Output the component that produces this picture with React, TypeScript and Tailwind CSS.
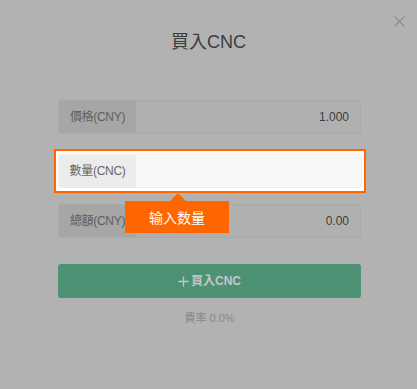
import React from 'react';

const font = { fontFamily: '"Liberation Sans", "Noto Sans CJK TC", sans-serif' };

const Row = ({
  label,
  value,
  highlight = false,
}: {
  label: string;
  value?: string;
  highlight?: boolean;
}) => (
  <div
    className={
      highlight
        ? 'flex h-[34px] rounded-[3px] border border-[#eeeeee] bg-[#f8f8f8] overflow-hidden'
        : 'flex h-[34px] rounded-[3px] border border-[#aaaaaa] bg-[#b0b0b0] overflow-hidden'
    }
  >
    <div
      className={
        highlight
          ? 'w-[77px] shrink-0 flex items-center justify-center bg-[#ececec] text-[12px] tracking-[-0.3px] text-[#666666]'
          : 'w-[77px] shrink-0 flex items-center justify-center bg-[#a6a6a6] text-[12px] tracking-[-0.3px] text-[#5e5e5e]'
      }
    >
      {label}
    </div>
    <div className="flex-1 flex items-center justify-end pr-[11px] text-[12px] text-[#3c3c3c]">
      {value}
    </div>
  </div>
);

export default function App() {
  return (
    <div
      className="relative w-[417px] h-[389px] bg-[#b2b2b2] overflow-hidden"
      style={font}
    >
      {/* close */}
      <button className="absolute top-[16px] left-[394px] w-[11px] h-[11px]">
        <svg viewBox="0 0 11 11" width="11" height="11">
          <path d="M0.5 0.5L10.5 10.5M10.5 0.5L0.5 10.5" stroke="#8c8c8c" strokeWidth="1.1" />
        </svg>
      </button>

      <h2 className="pt-[30px] text-center text-[18px] leading-[24px] text-[#3d3d3d]">
        買入CNC
      </h2>

      <div className="ml-[58px] mr-[56px] mt-[46px] flex flex-col">
        <Row label="價格(CNY)" value="1.000" />

        {/* highlighted step */}
        <div className="relative z-10 mt-[15px] -ml-[4px] -mr-[5px] border-2 border-[#ff6600] bg-white px-[2px] py-[3px]">
          <Row label="數量(CNC)" highlight />
          <div
            className="absolute left-[69px] top-[50px] w-[104px] h-[32px] bg-[#ff6600] flex items-center justify-center text-[14px] text-white"
            style={{ fontFamily: '"Noto Sans CJK SC", sans-serif' }}
          >
            <span className="absolute -top-[8px] left-[45px] w-0 h-0 border-x-[8px] border-x-transparent border-b-[8px] border-b-[#ff6600]" />
            输入数量
          </div>
        </div>

        <div className="mt-[11px]">
          <Row label="總額(CNY)" value="0.00" />
        </div>

        <button className="mt-[26px] h-[34px] rounded-[3px] bg-[#4e9276] flex items-center justify-center gap-[2px] text-[12px] font-bold text-[#c6c6c6]">
          <svg viewBox="0 0 12 12" width="11" height="11">
            <path d="M6 0.5V11.5M0.5 6H11.5" stroke="#c6c6c6" strokeWidth="1.4" />
          </svg>
          買入CNC
        </button>

        <p className="mt-[14px] text-center text-[11px] leading-[12px] text-[#888888]">
          費率 0.0%
        </p>
      </div>
    </div>
  );
}
